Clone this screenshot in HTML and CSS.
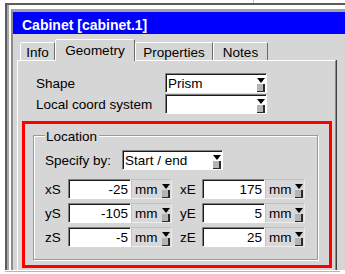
FILE: index.html
```html
<!DOCTYPE html>
<html lang="en">
<head>
  <meta charset="UTF-8" />
  <title>Cabinet</title>
  <link rel="stylesheet" href="styles.css">
</head>
<body>
  <div class="tick"></div>
  <div class="desk">
    <div class="dialog">
      <div class="title">Cabinet [cabinet.1]</div>

      <div class="tabs">
        <div class="tab tab-info">Info</div>
        <div class="tab tab-geo active">Geometry</div>
        <div class="tab tab-props">Properties</div>
        <div class="tab tab-notes">Notes</div>
      </div>

      <div class="panel">
        <div class="field-row">
          <span class="field-label">Shape</span>
          <div class="combo combo-wide"><span class="combo-text">Prism</span><span class="drop"></span></div>
        </div>
        <div class="field-row second">
          <span class="field-label">Local coord system</span>
          <div class="combo combo-wide"><span class="combo-text"></span><span class="drop"></span></div>
        </div>

        <div class="highlight">
          <div class="group">
            <div class="legend">Location</div>
            <div class="spec-row">
              <span class="spec-label">Specify by:</span>
              <div class="combo combo-spec"><span class="combo-text">Start / end</span><span class="drop"></span></div>
            </div>

            <div class="coords">
              <span class="coord-label">xS</span>
              <div class="num">-25</div>
              <div class="unit"><span class="unit-text">mm</span><span class="drop"></span></div>
              <span class="coord-label end">xE</span>
              <div class="num">175</div>
              <div class="unit"><span class="unit-text">mm</span><span class="drop"></span></div>

              <span class="coord-label">yS</span>
              <div class="num">-105</div>
              <div class="unit"><span class="unit-text">mm</span><span class="drop"></span></div>
              <span class="coord-label end">yE</span>
              <div class="num">5</div>
              <div class="unit"><span class="unit-text">mm</span><span class="drop"></span></div>

              <span class="coord-label">zS</span>
              <div class="num">-5</div>
              <div class="unit"><span class="unit-text">mm</span><span class="drop"></span></div>
              <span class="coord-label end">zE</span>
              <div class="num">25</div>
              <div class="unit"><span class="unit-text">mm</span><span class="drop"></span></div>
            </div>
          </div>
        </div>
      </div>
    </div>
  </div>
  <div class="foot"></div>
</body>
</html>
```

FILE: styles.css
```css
body {
  margin: 0;
  background: #fff;
  font-family: "Liberation Sans", Arial, sans-serif;
  font-size: 13.5px;
  color: #000;
  overflow: hidden;
}
.tick {
  margin-left: 253px;
  width: 1px;
  height: 3px;
  background: #c4c4c4;
}
.desk {
  margin-left: 5px;
  height: 267px;
  box-sizing: border-box;
  border-top: 2px solid #5c5c5c;
  border-left: 2px solid #5c5c5c;
  padding: 4px 0 0 4px;
  box-shadow: inset 2px 0 #a8a8a8;
  overflow: hidden;
}
.dialog {
  height: 100%;
  box-sizing: border-box;
  border-top: 3px solid #a3a3a3;
  border-left: 2px solid #8c8c8c;
  background: #d6d6d6;
  display: flex;
  flex-direction: column;
}
.title {
  height: 18px;
  padding: 4px 0 0 9px;
  background: #0000ff;
  color: #fff;
  font-weight: bold;
  font-size: 14px;
  line-height: 18px;
  white-space: nowrap;
}

/* tabs */
.tabs {
  display: flex;
  align-items: flex-end;
  margin-top: 5px;
  padding-left: 7px;
}
.tab {
  box-sizing: border-box;
  height: 18px;
  padding-top: 2px;
  line-height: 15px;
  text-align: center;
  border: 1px solid;
  border-bottom: 0;
  border-color: #fff #6a6a6a transparent #fff;
  border-radius: 2px 2px 0 0;
  background: #d6d6d6;
}
.tab-info { width: 35px; }
.tab-geo { width: 80px; }
.tab-props { width: 78px; }
.tab-notes { width: 55px; }
.tab.active {
  height: 22px;
  padding-top: 3px;
  margin-bottom: -1px;
  position: relative;
  z-index: 1;
}

.panel {
  flex: 1;
  margin-left: 4px;
  width: 319px;
  box-sizing: border-box;
  border-top: 1px solid #fff;
  border-left: 1px solid #fff;
  border-right: 1px solid #8a8a8a;
  box-shadow: 1px 0 #404040;
  padding-top: 12px;
}
.field-row {
  display: flex;
  align-items: center;
  height: 20px;
  padding-left: 18px;
}
.field-row.second { margin-top: 1px; }
.field-label {
  width: 129px;
  line-height: 15px;
  padding-top: 1px;
}

/* combo boxes */
.combo {
  display: flex;
  box-sizing: border-box;
  height: 20px;
  background: #fff;
  border: 1px solid;
  border-color: #808080 #fff #fff #808080;
  box-shadow: inset 1px 1px #1a1a1a;
}
.combo-wide { width: 102px; }
.combo-spec { width: 101px; }
.combo-text {
  flex: 1;
  padding: 1px 0 0 2px;
  line-height: 17px;
  white-space: nowrap;
  overflow: hidden;
}
.drop {
  width: 8px;
  display: flex;
  flex-direction: column;
  align-items: center;
  padding-top: 4px;
  margin-right: 1px;
}
.drop::before {
  content: "";
  border-left: 4px solid transparent;
  border-right: 4px solid transparent;
  border-top: 5px solid #000;
}
.drop::after {
  content: "";
  flex: 1;
  width: 8px;
  box-sizing: border-box;
  margin-top: 1px;
  background: #b4b4b4;
  border-right: 2px solid #2a2a2a;
  border-bottom: 1px solid #2a2a2a;
}

/* location group */
.highlight {
  margin: 7px 0 0 4px;
  width: 310px;
  box-sizing: border-box;
  border: 3px solid #ff0000;
  padding: 11px 11px 5px 8px;
}
.group {
  border: 1px solid #9a9a9a;
  box-shadow: inset 1px 1px #fff, 1px 1px #fff;
  padding: 0 0 12px 11px;
}
.legend {
  width: max-content;
  margin-top: -7px;
  padding: 0 2px 0 1px;
  line-height: 15px;
  background: #d6d6d6;
}
.spec-row {
  display: flex;
  align-items: center;
  height: 20px;
  margin-top: 6px;
}
.spec-label {
  width: 77px;
  line-height: 15px;
  padding-top: 1px;
}

.coords {
  display: grid;
  grid-template-columns: 23px 63px 41px 30px 63px 40px;
  grid-auto-rows: 20px;
  row-gap: 4px;
  margin-top: 9px;
}
.coord-label {
  line-height: 15px;
  align-self: center;
  padding-top: 1px;
}
.coord-label.end { padding-left: 8px; }
.num {
  box-sizing: border-box;
  background: #fff;
  border: 1px solid;
  border-color: #808080 #fff #fff #808080;
  box-shadow: inset 1px 1px #1a1a1a;
  text-align: right;
  padding: 1px 2px 0 0;
  line-height: 17px;
}
.unit {
  display: flex;
  box-sizing: border-box;
  background: #d8d8d8;
  border: 1px solid;
  border-color: #c2c2c2 #ececec #ececec #c2c2c2;
}
.unit-text {
  flex: 1;
  padding: 1px 0 0 3px;
  line-height: 17px;
}

.foot {
  margin: 1px 0 0 5px;
  width: 335px;
  height: 1px;
  background: #f2b225;
}
```
